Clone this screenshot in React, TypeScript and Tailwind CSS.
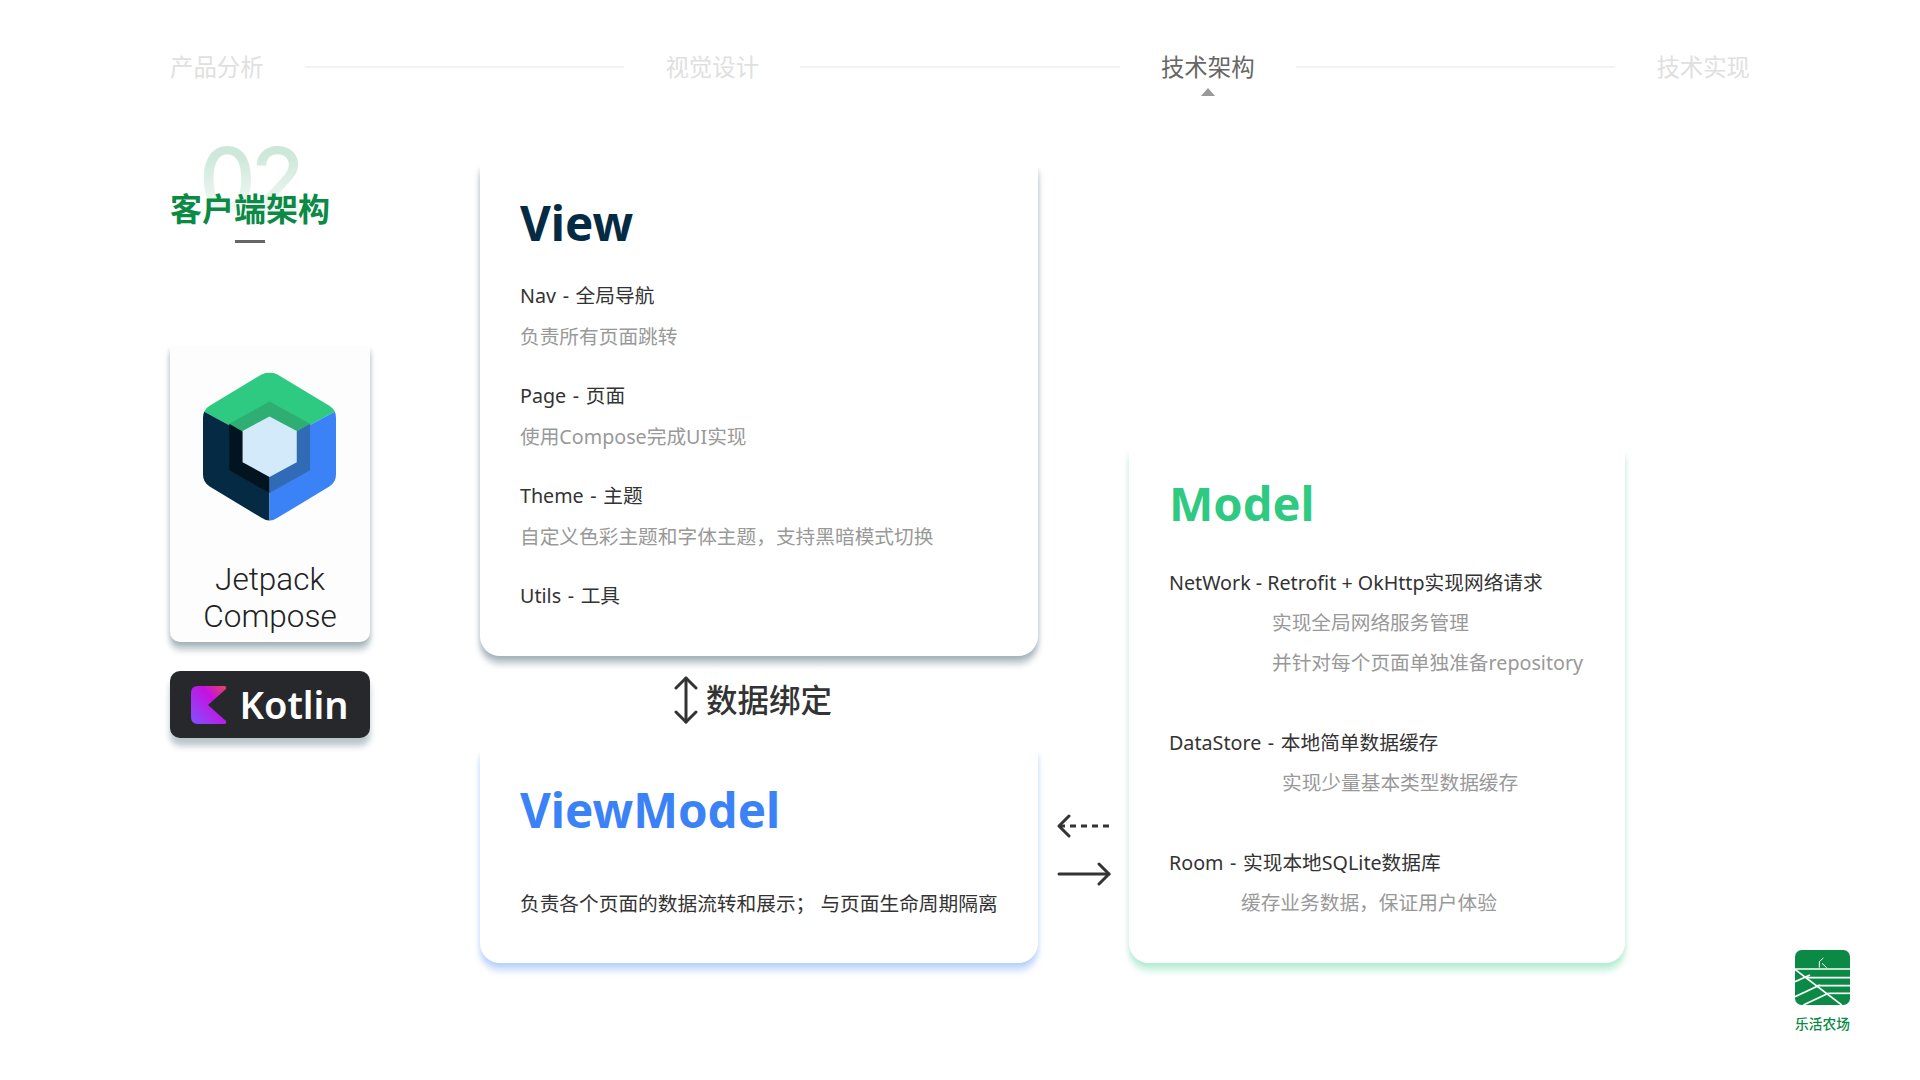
import React from 'react';

const navItems = ['产品分析', '视觉设计', '技术架构', '技术实现'];

const TopNav: React.FC = () => {
	return (
		<div className="flex items-center px-[170px] pt-[51px] h-[84px]">
			{navItems.map((item, index) => (
				<React.Fragment key={item}>
					{index > 0 && <div className="flex-1 h-[2px] bg-[#f3f3f3] mx-[41px] -translate-y-[1px]"></div>}
					<div className={`relative text-[23.4px] leading-[33px] ${index === 2 ? 'text-[#666666]' : 'text-[#e0e0e0]'}`}>
						{item}
						{index === 2 && (
							<div className="absolute left-1/2 -translate-x-1/2 top-[37px] w-0 h-0 border-x-[7.5px] border-x-transparent border-b-[8px] border-b-[#999999]"></div>
						)}
					</div>
				</React.Fragment>
			))}
		</div>
	);
};

const ComposeLogo: React.FC = () => (
	<svg width="133" height="152" viewBox="158 95 400 450" className="-translate-x-[1px]">
		<defs>
			<clipPath id="hex">
				<path d="M334 102 Q358 90 382 102 L538 196 Q558 208 558 232 L558 403 Q558 427 538 439 L382 533 Q358 550 334 533 L178 439 Q158 427 158 403 L158 232 Q158 208 178 196 Z" />
			</clipPath>
		</defs>
		<g clipPath="url(#hex)">
			<polygon points="358,85 570,205 358,320 146,205" fill="#2fca82" />
			<polygon points="146,205 358,320 358,550 146,550" fill="#042b43" />
			<polygon points="570,205 358,320 358,550 570,550" fill="#3b82f6" />
			<polygon points="358,183 480,250 358,320 237,250" fill="#2fae73" />
			<polygon points="237,250 358,320 358,458 237,390" fill="#01141f" />
			<polygon points="480,250 358,320 358,458 480,390" fill="#326bb5" />
			<polygon points="358,228 440,272 440,366 358,410 277,366 277,272" fill="#d3eafa" />
		</g>
	</svg>
);

const KotlinLogo: React.FC = () => (
	<svg width="36" height="38" viewBox="0 0 36 38">
		<defs>
			<linearGradient id="kt" x1="1" y1="0" x2="0" y2="1">
				<stop offset="0" stopColor="#e44857" />
				<stop offset="0.35" stopColor="#c711e1" />
				<stop offset="1" stopColor="#7f52ff" />
			</linearGradient>
		</defs>
		<path d="M7 0 L34 0 Q36 1 35 3 L17 19 L35 35 Q36 37 34 38 L7 38 Q0 38 0 31 L0 7 Q0 0 7 0 Z" fill="url(#kt)" />
	</svg>
);

const FarmLogo: React.FC = () => (
	<svg width="55" height="55" viewBox="105 60 165 165">
		<rect x="105" y="60" width="165" height="165" rx="20" fill="#0a8a45" />
		<g stroke="#ffffff" strokeWidth="5" fill="none">
			<path d="M105 117 H270" />
			<path d="M140 143 H270" />
			<path d="M172 167 H270" />
			<path d="M205 190 H270" />
			<path d="M105 118 L245 225" />
			<path d="M105 155 L150 135" />
			<path d="M105 200 L180 165" />
			<path d="M130 225 L205 190" />
			<path d="M178 113 V95 L190 84" strokeWidth="3" />
			<path d="M186 100 L200 113" strokeWidth="3" />
		</g>
	</svg>
);

const Row: React.FC<{ title: string; desc?: string }> = ({ title, desc }) => (
	<div className="mb-[20px]">
		<div className="text-[19.7px] leading-[38px] mb-[2px] text-[#333333] [word-spacing:1.5px]">{title}</div>
		{desc && <div className="text-[19.7px] leading-[40px] text-[#999999]">{desc}</div>}
	</div>
);

const SideColumn: React.FC = () => (
	<div className="w-[200px] shrink-0">
		<div className="relative h-[80px]">
			<div className="absolute left-[29px] -top-[36px] text-[88px] leading-[100px] font-medium font-['Inter'] tracking-[-5px] bg-linear-to-b from-[#cde7da] via-[#cde7da] via-25% to-white bg-clip-text text-transparent">
				02
			</div>
			<div className="absolute left-0 top-[21px] text-[32px] leading-[45px] font-bold text-[#0a8a45] whitespace-nowrap">
				客户端架构
			</div>
			<div className="absolute left-[65px] top-[75px] w-[30px] h-[3px] bg-[#666666]"></div>
		</div>
		<div className="mt-[100px] h-[297px] rounded-b-[10px] bg-[#fdfdfd] shadow-[0_8px_6px_rgba(4,43,67,0.27),-2px_3px_3px_rgba(4,43,67,0.06),2px_3px_3px_rgba(4,43,67,0.06)] flex flex-col items-center pt-[26px]">
			<ComposeLogo />
			<div className="mt-[38px] text-center text-[31.5px] leading-[37px] font-light font-['Roboto'] text-[#222222]">
				Jetpack<br />Compose
			</div>
		</div>
		<div className="mt-[29px] h-[67px] rounded-[10px] bg-[#27282c] shadow-[0_8px_6px_rgba(4,43,67,0.27)] flex items-center justify-center gap-[12px]">
			<KotlinLogo />
			<span className="text-[38px] leading-[48px] pb-[2px] font-semibold text-white">Kotlin</span>
		</div>
	</div>
);

const ViewCard: React.FC = () => (
	<div className="h-[491px] rounded-b-[20px] bg-white shadow-[0_8px_6px_rgba(4,43,67,0.27),-2px_3px_3px_rgba(4,43,67,0.06),2px_3px_3px_rgba(4,43,67,0.06)] pl-[40px] pt-[24px]">
		<div className="text-[47.5px] leading-[68px] font-bold text-[#042b43] mb-[20px]">View</div>
		<Row title="Nav - 全局导航" desc="负责所有页面跳转" />
		<Row title="Page - 页面" desc="使用Compose完成UI实现" />
		<Row title="Theme - 主题" desc="自定义色彩主题和字体主题，支持黑暗模式切换" />
		<Row title="Utils - 工具" />
	</div>
);

const DataBinding: React.FC = () => (
	<div className="h-[94px] flex items-center pl-[194px] pb-[6px] gap-[8px]">
		<svg width="24" height="48" viewBox="0 0 24 48" fill="none" stroke="#333333" strokeWidth="3" strokeLinecap="round" strokeLinejoin="round">
			<path d="M12 2 V46" />
			<path d="M2 12 L12 2 L22 12" />
			<path d="M2 36 L12 46 L22 36" />
		</svg>
		<span className="text-[31.5px] font-medium text-[#333333]">数据绑定</span>
	</div>
);

const ViewModelCard: React.FC = () => (
	<div className="h-[213px] rounded-b-[20px] bg-white shadow-[0_8px_6px_rgba(59,130,246,0.27),-2px_3px_3px_rgba(59,130,246,0.06),2px_3px_3px_rgba(59,130,246,0.06)] pl-[40px] pt-[26px]">
		<div className="text-[47.5px] leading-[68px] font-bold text-[#3b82f6]">ViewModel</div>
		<div className="mt-[40px] text-[19.7px] leading-[40px] text-[#333333] whitespace-nowrap">
			负责各个页面的数据流转和展示； 与页面生命周期隔离
		</div>
	</div>
);

const Arrows: React.FC = () => (
	<div className="w-[91px] shrink-0 flex flex-col items-center pt-[649px] gap-[24px]">
		<svg width="54" height="24" viewBox="0 0 54 24" fill="none" stroke="#333333" strokeWidth="3" strokeLinecap="round" strokeLinejoin="round">
			<path d="M12 2 L2 12 L12 22" />
			<path d="M2 12 H52" strokeDasharray="6 5" strokeLinecap="butt" />
		</svg>
		<svg width="54" height="24" viewBox="0 0 54 24" fill="none" stroke="#333333" strokeWidth="3" strokeLinecap="round" strokeLinejoin="round">
			<path d="M2 12 H52" />
			<path d="M42 2 L52 12 L42 22" />
		</svg>
	</div>
);

const ModelCard: React.FC = () => (
	<div className="mt-[285px] w-[496px] h-[513px] rounded-b-[20px] bg-white shadow-[0_8px_6px_rgba(47,202,130,0.27),-2px_3px_3px_rgba(47,202,130,0.06),2px_3px_3px_rgba(47,202,130,0.06)] pl-[40px] pt-[19px]">
		<div className="text-[47px] leading-[68px] font-bold text-[#2fca82] mb-[26px]">Model</div>
		<div className="text-[19.7px] leading-[40px] text-[#333333]">NetWork - Retrofit + OkHttp实现网络请求</div>
		<div className="text-[19.7px] leading-[40px] text-[#999999] ml-[103px]">实现全局网络服务管理</div>
		<div className="text-[19.7px] leading-[40px] text-[#999999] ml-[103px]">并针对每个页面单独准备repository</div>
		<div className="mt-[40px] text-[19.7px] leading-[40px] text-[#333333] [word-spacing:1.5px]">DataStore - 本地简单数据缓存</div>
		<div className="text-[19.7px] leading-[40px] text-[#999999] ml-[113px]">实现少量基本类型数据缓存</div>
		<div className="mt-[40px] text-[19.7px] leading-[40px] text-[#333333] [word-spacing:1.5px]">Room - 实现本地SQLite数据库</div>
		<div className="text-[19.7px] leading-[40px] text-[#999999] ml-[72px]">缓存业务数据，保证用户体验</div>
	</div>
);

const App: React.FC = () => {
	return (
		<div className="relative w-[1920px] h-[1080px] overflow-hidden bg-white font-['Noto_Sans','Noto_Sans_CJK_SC',sans-serif]">
			<TopNav />
			<div className="flex pl-[170px] pt-[81px]">
				<SideColumn />
				<div className="w-[558px] ml-[110px] shrink-0">
					<ViewCard />
					<DataBinding />
					<ViewModelCard />
				</div>
				<Arrows />
				<ModelCard />
			</div>
			<div className="absolute left-[1795px] top-[950px] w-[55px] flex flex-col items-center">
				<FarmLogo />
				<div className="mt-[9px] text-[13.7px] leading-[20px] font-medium text-[#0a8a45] whitespace-nowrap">乐活农场</div>
			</div>
		</div>
	);
};

export default App;
